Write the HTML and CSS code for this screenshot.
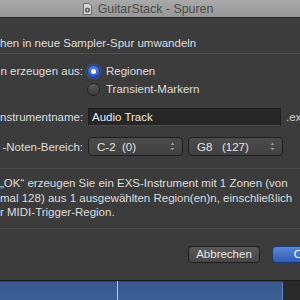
FILE: index.html
```html
<!DOCTYPE html>
<html lang="de">
<head>
  <meta charset="UTF-8" />
  <title>GuitarStack - Spuren</title>
  <link rel="stylesheet" href="styles.css">
</head>
<body>

<div class="titlebar">
  <svg class="doc-icon" width="9" height="12" viewBox="0 0 9 12">
    <path d="M0.5 0.5 H6 L8.5 3 V11.5 H0.5 Z" fill="#d8d8d8" stroke="#6a6a6a" stroke-width="1"/>
    <circle cx="4.5" cy="7" r="2.6" fill="#5c5c5c"/>
    <circle cx="4.5" cy="7" r="0.9" fill="#d8d8d8"/>
  </svg>
  <span class="title">GuitarStack - Spuren</span>
</div>

<div class="sheet">
  <h1 class="heading">hen in neue Sampler-Spur umwandeln</h1>

  <div class="form">
    <div class="row">
      <div class="label">n erzeugen aus:</div>
      <label class="radio">
        <span class="dot on"></span>
        Regionen
      </label>
    </div>
    <div class="row">
      <div class="label"></div>
      <label class="radio">
        <span class="dot"></span>
        Transient-Markern
      </label>
    </div>

    <div class="row row-field">
      <div class="label">nstrumentname:</div>
      <input class="field" type="text" value="Audio Track">
      <span class="ext">.ex</span>
    </div>

    <div class="row row-popup">
      <div class="label">-Noten-Bereich:</div>
      <div class="popup">
        <span class="popup-text">C-2  (0)</span>
        <svg width="5" height="9" viewBox="0 0 5 9"><path d="M2.5 0.5 L4.5 3 H0.5 Z M2.5 8.5 L4.5 6 H0.5 Z" fill="#9a9a9a"/></svg>
      </div>
      <div class="popup">
        <span class="popup-text">G8   (127)</span>
        <svg width="5" height="9" viewBox="0 0 5 9"><path d="M2.5 0.5 L4.5 3 H0.5 Z M2.5 8.5 L4.5 6 H0.5 Z" fill="#9a9a9a"/></svg>
      </div>
    </div>
  </div>

  <p class="info">
    „OK“ erzeugen Sie ein EXS-Instrument mit 1 Zonen (von<br>
    mal 128) aus 1 ausgewählten Region(en)n, einschließlich<br>
    r MIDI-Trigger-Region.
  </p>

  <div class="buttons">
    <button class="btn">Abbrechen</button>
    <button class="btn btn-ok">OK</button>
  </div>
</div>

<div class="tracks">
  <div class="region region-a"></div>
  <div class="playhead"></div>
  <div class="region region-b"></div>
  <div class="track-rest"></div>
</div>

</body>
</html>
```

FILE: styles.css
```css
* {
  box-sizing: border-box;
}

html, body {
  margin: 0;
  padding: 0;
  width: 300px;
  height: 300px;
  overflow: hidden;
}

body {
  font-family: 'Liberation Sans', Arial, sans-serif;
  font-size: 11.5px;
  background: #3c3c3c;
  color: #dedede;
}

.titlebar {
  height: 18px;
  display: flex;
  align-items: center;
  justify-content: center;
  padding-right: 4px;
  background: linear-gradient(#a9a9a9, #979797);
  border-bottom: 1px solid #2a2a2a;
}

.doc-icon {
  margin-right: 6px;
}

.title {
  font-size: 12.4px;
  color: #4c4c4c;
}

.sheet {
  width: 360px;
  background: #3c3c3c;
}

.heading {
  margin: 0;
  padding: 18px 0 2px;
  font-size: 11.5px;
  font-weight: normal;
  line-height: 15px;
  white-space: nowrap;
  border-bottom: 1px solid #4f4f4f;
}

.form {
  padding-top: 8px;
  padding-bottom: 12px;
  border-bottom: 1px solid #4c4c4c;
}

.row {
  display: flex;
  align-items: center;
  height: 18px;
}

.label {
  width: 83px;
  flex-shrink: 0;
  margin-right: 5px;
  text-align: right;
  white-space: nowrap;
}

.radio {
  display: flex;
  align-items: center;
}

.dot {
  width: 13px;
  height: 13px;
  border-radius: 50%;
  margin: 0 6px 0 -1px;
  background: linear-gradient(#5c5c5c, #3a3a3a);
  border: 1px solid #232323;
  display: flex;
  align-items: center;
  justify-content: center;
}

.dot.on {
  background: linear-gradient(#4d7ef0, #2a58c9);
  border-color: #1c3a86;
  box-shadow: 0 0 2px 1px rgba(70, 110, 230, 0.6);
}

.dot.on::after {
  content: "";
  width: 5px;
  height: 5px;
  border-radius: 50%;
  background: #fff;
}

.row-field {
  margin-top: 10px;
}

.field {
  width: 193px;
  height: 18px;
  margin: 0;
  padding: 0 3px;
  font-family: inherit;
  font-size: 11.5px;
  color: #ececec;
  background: #272727;
  border: 1px solid #1c1c1c;
  border-bottom-color: #4a4a4a;
  outline: none;
}

.ext {
  margin-left: 5px;
  color: #d0d0d0;
}

.row-popup {
  margin-top: 11px;
  height: 19px;
}

.popup {
  width: 95px;
  height: 19px;
  margin-right: 5px;
  padding: 0 7px 0 8px;
  display: flex;
  align-items: center;
  justify-content: space-between;
  background: linear-gradient(#4c4c4c, #414141);
  border: 1px solid #1f1f1f;
  border-radius: 4px;
}

.popup-text {
  white-space: pre;
  color: #e4e4e4;
}

.info {
  margin: 7px 0 0;
  padding-bottom: 8px;
  line-height: 14.5px;
  white-space: nowrap;
  border-bottom: 1px solid #4c4c4c;
}

.buttons {
  display: flex;
  justify-content: flex-end;
  gap: 12px;
  padding: 17px 28px 17px 0;
}

.btn {
  width: 72px;
  height: 17px;
  padding: 0;
  font-family: inherit;
  font-size: 11.5px;
  color: #e6e6e6;
  background: linear-gradient(#585858, #474747);
  border: 1px solid #1e1e1e;
  border-radius: 4px;
}

.btn-ok {
  width: 60px;
  color: #fff;
  background: linear-gradient(#5a86d6, #2f5db4);
  border-color: #1d3c7a;
}

.tracks {
  display: flex;
  height: 20px;
  border-top: 1px solid #1a1a1a;
  background: #2a2a2a;
}

.region {
  background: linear-gradient(#37598f, #3b5e95);
  border-top: 1px solid #27436f;
}

.region-a {
  width: 117px;
}

.playhead {
  width: 1px;
  background: #c9cbd0;
}

.region-b {
  width: 165px;
  border-right: 1px solid #6d87b5;
  border-top-right-radius: 3px;
}

.track-rest {
  flex: 1;
}
```
